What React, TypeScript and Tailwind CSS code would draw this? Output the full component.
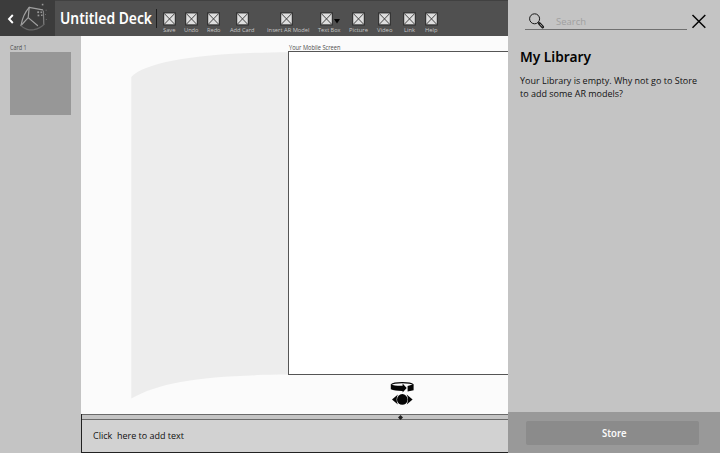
import React from "react";

type Tool = { label: string; width: string; labelWidth: string; shift?: string; menu?: boolean };

const tools: Tool[] = [
  { label: "Save", width: "w-[22px]", labelWidth: "12.5" },
  { label: "Undo", width: "w-[22px]", labelWidth: "14.5" },
  { label: "Redo", width: "w-[22px]", labelWidth: "13.5" },
  { label: "Add Card", width: "w-[36px]", labelWidth: "24.5" },
  { label: "Insert AR Model", width: "w-[55px]", labelWidth: "42.5", shift: "mr-[3px]" },
  { label: "Text Box", width: "w-[28px]", labelWidth: "22.5", shift: "mr-[7px]", menu: true },
  { label: "Picture", width: "w-[30px]", labelWidth: "19" },
  { label: "Video", width: "w-[22px]", labelWidth: "15.5" },
  { label: "Link", width: "w-[27px]", labelWidth: "11" },
  { label: "Help", width: "w-[17px]", labelWidth: "12.5" },
];

type FitProps = {
  text: string;
  width: string;
  size: number;
  height: number;
  baseline: number;
  color: string;
  weight?: number;
  className?: string;
};

/* A single line of text set to a fixed measure. */
function Line({ text, width, size, height, baseline, color, weight = 400, className = "" }: FitProps) {
  return (
    <svg width={width} height={height} className={`block shrink-0 overflow-visible ${className}`}>
      <text
        x="0"
        y={baseline}
        textLength={width}
        lengthAdjust="spacingAndGlyphs"
        fontSize={size}
        fontWeight={weight}
        fill={color}
        xmlSpace="preserve"
      >
        {text}
      </text>
    </svg>
  );
}

function CrossBox() {
  return (
    <svg width="13" height="14" viewBox="0 0 13 14" className="block">
      <rect x=".7" y=".9" width="11.6" height="12" fill="#dedede" stroke="#252525" strokeWidth="1" />
      <path d="M1.2 1.4 11.8 12.4M11.8 1.4 1.2 12.4" stroke="#333" strokeWidth=".9" />
    </svg>
  );
}

function ToolButton({ tool }: { tool: Tool }) {
  return (
    <button className={`flex h-9 shrink-0 flex-col items-center pt-[12px] ${tool.width}`}>
      <span className={`relative block ${tool.shift ?? ""}`}>
        <CrossBox />
        {tool.menu && (
          <svg width="6" height="5" className="absolute top-[7px] left-[14px]">
            <path d="M0 0H6L3 4.6Z" fill="#050505" />
          </svg>
        )}
      </span>
      <Line text={tool.label} width={tool.labelWidth} size={6.1} height={9} baseline={6.3} color="#c6c6c6" />
    </button>
  );
}

function Logo() {
  return (
    <svg width="30" height="32" viewBox="19 3 30 32" fill="none" className="block">
      <g strokeWidth="1.2" strokeLinejoin="round" strokeLinecap="round">
        <path d="M21 26.5C22 20.5 25 13 29.2 8.3L42.6 10.8" stroke="#a0a0a0" />
        <path d="M29.2 8.3 28.2 18.6 21 26.5M28.2 18.6 37.5 26.5" stroke="#a0a0a0" />
        <path d="M43.4 12 43.8 25.5" stroke="#808080" />
        <path d="M21 26.5C24 30.5 30 31.3 34 30.6 38 29.8 41.5 28 43.8 25.5" stroke="#666" />
      </g>
      <g fill="#979797">
        <rect x="41.8" y="4.8" width="1.6" height="1.6" />
        <rect x="37.3" y="12.3" width="1.8" height="1.8" />
        <rect x="40.5" y="12.5" width="1.6" height="1.6" />
        <rect x="37.6" y="15.6" width="1.7" height="1.7" />
        <rect x="41" y="15.5" width="1.5" height="1.5" />
      </g>
      <g fill="#6c6c6c">
        <rect x="45.6" y="10.7" width="1.1" height="1.1" />
        <rect x="45.8" y="20" width="1" height="1" />
        <rect x="45" y="15" width="1" height="1" />
      </g>
    </svg>
  );
}

function Header() {
  return (
    <header className="flex h-9 shrink-0 border-t border-[#414141] bg-[#505050]">
      <div className="-mt-px flex h-9 w-[55px] shrink-0 items-center bg-[#3c3c3c] pl-[7px]">
        <svg width="7" height="10" viewBox="0 0 7 10" className="mt-[2px] mr-[5px] block">
          <path d="M5.8 1 2 5 5.8 9" fill="none" stroke="#fff" strokeWidth="1.9" />
        </svg>
        <Logo />
      </div>
      <div className="-mt-px flex pl-[5px]">
        <Line text="Untitled Deck" width="92" size={15.4} height={36} baseline={24.4} color="#fff" weight={600} className="font-['Noto_Sans',sans-serif]" />
        <div className="mt-[9px] ml-[4px] h-[19px] w-px bg-[#1e1e1e]" />
        <nav className="ml-[1.5px] flex">
          {tools.map((tool) => (
            <ToolButton key={tool.label} tool={tool} />
          ))}
        </nav>
      </div>
    </header>
  );
}

function ViewControls() {
  return (
    <svg width="26" height="25" viewBox="390 381 26 25" className="block">
      <path d="M391.2 384.6C394 382 410.5 382 413.2 384.6" fill="none" stroke="#050505" strokeWidth="1.1" />
      <path d="M390.8 384.3C393.5 385.6 398 386 402.6 385.8V383.6L406.7 388 402.6 392.4V390.9C398 391 393.5 390.4 390.8 389.3Z" fill="#050505" />
      <path d="M413.6 384.3V390.2L407.6 391.6V386Z" fill="#050505" />
      <circle cx="402.3" cy="399.4" r="5.3" fill="#050505" />
      <path d="M397.9 394.4 392 399.4 397.9 404.4C396.2 401.4 396.2 397.4 397.9 394.4ZM406.7 394.4 412.6 399.4 406.7 404.4C408.4 401.4 408.4 397.4 406.7 394.4Z" fill="#050505" />
    </svg>
  );
}

function Canvas() {
  return (
    <section className="flex h-[378px] shrink-0 flex-col overflow-hidden bg-[#fbfbfb]">
      <div className="flex h-[339px]">
        <svg width="207" height="363" viewBox="81 36 207 363" className="block shrink-0">
          <path d="M131.3 77C146 61 205 52.6 288 52.2V374.6C210 375 161 381 131.3 398.5Z" fill="#ededed" />
        </svg>
        <div className="flex w-[220px] flex-col pt-[8px]">
          <Line text="Your Mobile Screen" width="51.5" size={6.3} height={7} baseline={6} color="#4c4c4c" className="ml-[0.5px]" />
          <div className="h-[324px] border border-r-0 border-[#555] bg-white" />
        </div>
      </div>
      <div className="mt-[6px] ml-[309px]">
        <ViewControls />
      </div>
    </section>
  );
}

function Notes() {
  return (
    <section className="flex h-[39px] flex-col border-b border-l border-[#222]">
      <div className="flex h-[6px] shrink-0 items-center border-y border-[#6a6a6a] bg-[#c4c4c4] pl-[315px]">
        <svg width="7" height="5" className="block shrink-0">
          <path d="M3.5 0 6 2.5 3.5 5 1 2.5Z" fill="#222" />
        </svg>
      </div>
      <div className="flex grow bg-[#d2d2d2] pl-[11px]">
        <Line text="Click  here to add text" width="91" size={9.1} height={30} baseline={19.2} color="#101010" />
      </div>
    </section>
  );
}

function Library() {
  return (
    <aside className="flex h-full w-[212px] shrink-0 flex-col bg-[#c4c4c4]">
      <div className="flex h-[30px] shrink-0 pl-[17px]">
        <div className="flex w-[162px] items-start border-b border-[#707070] pl-[3px]">
          <svg width="17" height="17" viewBox="0 0 17 17" fill="none" className="mt-[12px] block">
            <circle cx="6.6" cy="6.8" r="5" stroke="#171717" strokeWidth="1" />
            <path d="m10.2 10.4 1.4 1.4" stroke="#171717" strokeWidth="1" />
            <path d="m11.4 11.6 3.3 3.4" stroke="#171717" strokeWidth="2.8" strokeLinecap="round" />
            <path d="m11.8 12 2.7 2.7" stroke="#b9b9b9" strokeWidth=".9" />
          </svg>
          <Line text="Search" width="30" size={9.4} height={29} baseline={24.6} color="#a0a0a0" className="ml-[11px]" />
        </div>
        <svg width="16" height="16" className="mt-[13px] ml-[4px] block">
          <path d="M1.5 2 14.3 14.8M14.3 2 1.5 14.8" stroke="#050505" strokeWidth="1.5" />
        </svg>
      </div>
      <div className="grow pl-[12px] pt-px">
        <Line text="My Library" width="71" size={14.6} height={42} baseline={31} color="#030303" weight={600} className="font-['Noto_Sans',sans-serif]" />
        <Line text="Your Library is empty. Why not go to Store" width="177" size={9.1} height={12} baseline={11} color="#121212" />
        <Line text="to add some AR models?" width="103" size={9.1} height={14} baseline={12} color="#121212" />
      </div>
      <div className="flex h-[41px] shrink-0 bg-[#999] pt-[9px] pl-[18px]">
        <button className="flex h-6 w-[173px] justify-center rounded-[2px] bg-[#8b8b8b]">
          <Line text="Store" width="24.5" size={10} height={24} baseline={15.6} color="#fafafa" weight={600} className="ml-[3px] font-['Noto_Sans',sans-serif]" />
        </button>
      </div>
    </aside>
  );
}

export default function App() {
  return (
    <div className="flex h-[453px] w-[720px] overflow-hidden bg-[#c4c4c4] font-['Open_Sans','Noto_Sans',sans-serif]">
      <div className="flex w-[508px] shrink-0 flex-col">
        <Header />
        <div className="flex h-[417px]">
          <aside className="w-[81px] shrink-0 bg-[#c4c4c4] pt-[8px] pl-[10px]">
            <Line text="Card 1" width="16.5" size={6.3} height={8} baseline={6} color="#4c4c4c" />
            <div className="h-[63px] w-[61px] bg-[#979797]" />
          </aside>
          <main className="flex w-[427px] flex-col">
            <Canvas />
            <Notes />
          </main>
        </div>
      </div>
      <Library />
    </div>
  );
}
